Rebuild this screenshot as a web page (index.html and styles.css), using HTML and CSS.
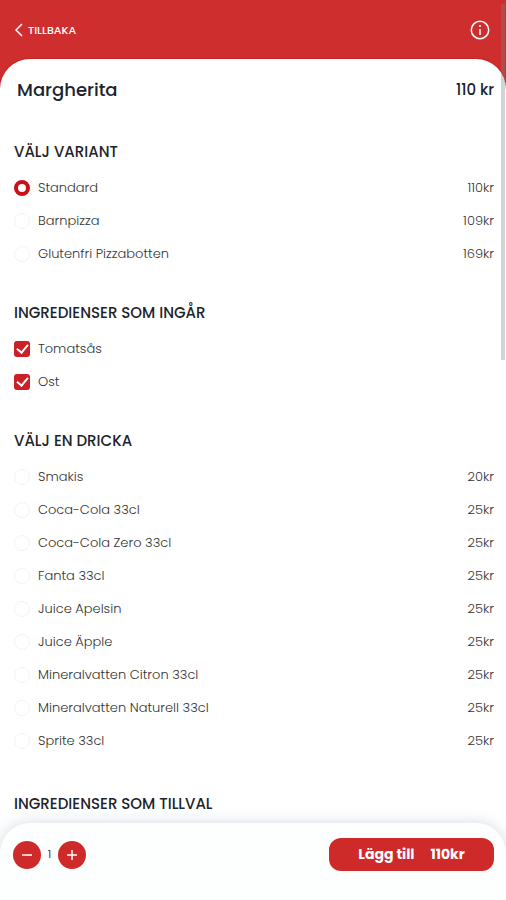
FILE: index.html
```html
<!DOCTYPE html>
<html lang="sv">
<head>
<meta charset="utf-8">
<meta name="viewport" content="width=device-width, initial-scale=1">
<title>Margherita</title>
<link rel="stylesheet" href="styles.css">
</head>
<body>
<header class="topbar">
  <a class="back" href="#">
    <svg width="8" height="14" viewBox="0 0 8 14" aria-hidden="true"><path d="M7 1 1 7l6 6"/></svg>
    <span>TILLBAKA</span>
  </a>
  <button class="info" type="button" aria-label="Information">
    <svg width="20" height="20" viewBox="0 0 20 20" aria-hidden="true"><circle cx="10" cy="10" r="8.7"/><path d="M10 9v6M10 5v2"/></svg>
  </button>
</header>
<main class="sheet">
  <div class="title">
    <h1>Margherita</h1>
    <strong>110 kr</strong>
  </div>

  <section class="group">
    <h2>VÄLJ VARIANT</h2>
    <ul>
      <li><label><input type="radio" name="variant" checked><span>Standard</span></label><span>110kr</span></li>
      <li><label><input type="radio" name="variant"><span>Barnpizza</span></label><span>109kr</span></li>
      <li><label><input type="radio" name="variant"><span>Glutenfri Pizzabotten</span></label><span>169kr</span></li>
    </ul>
  </section>

  <section class="group">
    <h2>INGREDIENSER SOM INGÅR</h2>
    <ul>
      <li><label><input type="checkbox" checked><span>Tomatsås</span></label></li>
      <li><label><input type="checkbox" checked><span>Ost</span></label></li>
    </ul>
  </section>

  <section class="group drinks">
    <h2>VÄLJ EN DRICKA</h2>
    <ul>
      <li><label><input type="radio" name="drink"><span>Smakis</span></label><span>20kr</span></li>
      <li><label><input type="radio" name="drink"><span>Coca-Cola 33cl</span></label><span>25kr</span></li>
      <li><label><input type="radio" name="drink"><span>Coca-Cola Zero 33cl</span></label><span>25kr</span></li>
      <li><label><input type="radio" name="drink"><span>Fanta 33cl</span></label><span>25kr</span></li>
      <li><label><input type="radio" name="drink"><span>Juice Apelsin</span></label><span>25kr</span></li>
      <li><label><input type="radio" name="drink"><span>Juice Äpple</span></label><span>25kr</span></li>
      <li><label><input type="radio" name="drink"><span>Mineralvatten Citron 33cl</span></label><span>25kr</span></li>
      <li><label><input type="radio" name="drink"><span>Mineralvatten Naturell 33cl</span></label><span>25kr</span></li>
      <li><label><input type="radio" name="drink"><span>Sprite 33cl</span></label><span>25kr</span></li>
    </ul>
  </section>

  <section class="group">
    <h2>INGREDIENSER SOM TILLVAL</h2>
  </section>
</main>
<footer class="order">
  <div class="stepper">
    <button type="button" aria-label="Minska antal"><svg width="12" height="12" viewBox="0 0 12 12" aria-hidden="true"><path d="M1 6h10"/></svg></button>
    <output>1</output>
    <button type="button" aria-label="Öka antal"><svg width="12" height="12" viewBox="0 0 12 12" aria-hidden="true"><path d="M1 6h10M6 1v10"/></svg></button>
  </div>
  <button class="add" type="button"><span>Lägg till</span><span>110kr</span></button>
</footer>
<div class="scroll-thumb" aria-hidden="true"></div>
</body>
</html>
```
FILE: styles.css
```css
* {
  box-sizing: border-box;
}

body {
  display: flex;
  flex-direction: column;
  height: 100vh;
  margin: 0;
  overflow: hidden;
  background: #cf2e2e;
  color: #1c232b;
  font-family: Poppins, Inter, "Liberation Sans", sans-serif;
  font-size: 13px;
}

button {
  border: 0;
  padding: 0;
  color: #fff;
  background: #cf2a2a;
  font-family: inherit;
  cursor: pointer;
}

svg {
  display: block;
  fill: none;
  stroke: currentColor;
  stroke-width: 1.5;
}

.topbar {
  display: flex;
  flex: none;
  align-items: center;
  justify-content: space-between;
  height: 59px;
  padding: 1px 16px 0 15px;
  color: #fff;
}

.back {
  display: flex;
  align-items: center;
  gap: 5px;
  color: #fff;
  font-size: 11px;
  font-weight: 500;
  text-decoration: none;
}

.info {
  background: none;
}

.sheet {
  flex: 1;
  min-height: 0;
  /* continues behind the order bar's rounded corners */
  margin-bottom: -40px;
  overflow: hidden;
  padding: 15px 12px 0 14px;
  border-radius: 30px 30px 0 0;
  background: #fff;
  box-shadow: 0 0 2px #c00d0d;
}

.title {
  display: flex;
  align-items: center;
  justify-content: space-between;
  height: 30px;
  margin-bottom: 38px;
  padding-left: 3px;
}

h1 {
  margin: 0;
  font-size: 18px;
  font-weight: 500;
}

.title strong {
  font-size: 15px;
  font-weight: 500;
}

.group {
  margin-bottom: 33px;
}

.drinks {
  margin-bottom: 37px;
}

h2 {
  margin: 0 0 9px;
  font-size: 15px;
  font-weight: 500;
  line-height: 20px;
}

ul {
  margin: 0;
  padding: 0;
  list-style: none;
}

li {
  display: flex;
  align-items: center;
  justify-content: space-between;
  height: 33px;
  color: #333;
  font-weight: 300;
}

label {
  display: flex;
  align-items: center;
  gap: 8px;
}

input {
  display: grid;
  place-items: center;
  width: 16px;
  height: 16px;
  margin: 0;
  appearance: none;
}

input[type="radio"] {
  border: 1px solid #f3f3f3;
  border-radius: 50%;
}

input[type="radio"]:checked {
  border: 4px solid #cc0f16;
}

input[type="checkbox"] {
  border-radius: 3px;
  background: #cc2027;
}

input[type="checkbox"]::before {
  width: 5px;
  height: 9px;
  margin-bottom: 2px;
  border: solid #fff;
  border-width: 0 2px 2px 0;
  content: "";
  transform: rotate(40deg);
}

.order {
  display: flex;
  flex: none;
  position: relative;
  align-items: flex-start;
  justify-content: space-between;
  padding: 15px 12px 29px 13px;
  border-radius: 30px 30px 0 0;
  background: #fdfefe;
  box-shadow: 0 0 16px #d3dae0;
}

.stepper {
  display: flex;
  align-items: center;
  height: 33px;
  color: #444;
  font-size: 11px;
}

.stepper output {
  width: 17px;
  text-align: center;
}

.stepper button {
  display: grid;
  place-items: center;
  width: 28px;
  height: 28px;
  border-radius: 50%;
}

.add {
  display: flex;
  align-items: center;
  justify-content: center;
  gap: 16px;
  width: 165px;
  height: 33px;
  border-radius: 12px;
  font-size: 14px;
  font-weight: 700;
}

.scroll-thumb {
  position: absolute;
  top: 4px;
  right: 1px;
  width: 4px;
  height: 356px;
  background: #80808059;
}
```
